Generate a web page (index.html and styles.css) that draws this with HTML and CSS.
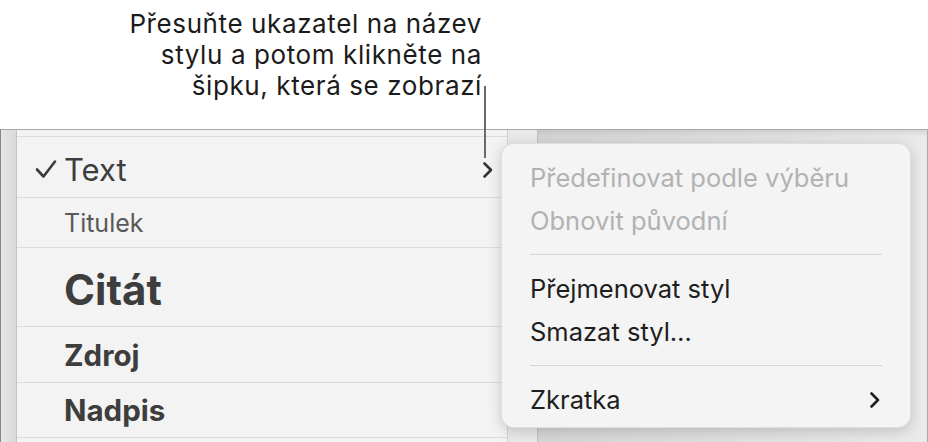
FILE: index.html
```html
<!DOCTYPE html>
<html>
<head>
<meta charset="UTF-8"/>
<title>Styly odstavce</title>
<link rel="stylesheet" href="styles.css">
</head>
<body>
<div class="callout">
<p class="callout-text">Přesuňte ukazatel na název<br>stylu a potom klikněte na<br>šipku, která se zobrazí</p>
<div class="callout-line"></div>
</div>
<div class="frame">
<div class="sidebar"></div>
<ul class="styles">
<li class="row row-cut"></li>
<li class="row row-text">
<svg class="check" width="22" height="20" viewBox="0 0 22 20"><path d="M2 10.5 L8.5 17.5 L20 2.5" fill="none" stroke="#3b3b3b" stroke-width="2.6" stroke-linecap="round" stroke-linejoin="round"/></svg>
<span class="name">Text</span>
<svg class="chevron" width="12" height="18" viewBox="0 0 12 18"><path d="M2.5 2.5 L9 9 L2.5 15.5" fill="none" stroke="#333" stroke-width="2.6" stroke-linecap="round" stroke-linejoin="round"/></svg>
</li>
<li class="row row-caption"><span class="name">Titulek</span></li>
<li class="row row-quote"><span class="name">Citát</span></li>
<li class="row row-source"><span class="name">Zdroj</span></li>
<li class="row row-heading"><span class="name">Nadpis</span></li>
</ul>
<div class="gutter"></div>
<div class="canvas"></div>
<div class="menu">
<div class="item disabled">Předefinovat podle výběru</div>
<div class="item disabled">Obnovit původní</div>
<div class="sep"></div>
<div class="item">Přejmenovat styl</div>
<div class="item">Smazat styl…</div>
<div class="sep"></div>
<div class="item">Zkratka
<svg class="chevron" width="12" height="18" viewBox="0 0 12 18"><path d="M2.5 2.5 L9 9 L2.5 15.5" fill="none" stroke="#1e1e1e" stroke-width="2.6" stroke-linecap="round" stroke-linejoin="round"/></svg>
</div>
</div>
</div>
</body>
</html>
```

FILE: styles.css
```css
body {
    margin: 0;
    width: 928px;
    height: 442px;
    overflow: hidden;
    background: #fff;
    font-family: Inter, "Liberation Sans", sans-serif;
}
.callout {
    position: relative;
    height: 129px;
}
.callout-text {
    margin: 0;
    padding: 8px 0 0 0;
    width: 482px;
    text-align: right;
    font-size: 26px;
    letter-spacing: 0.6px;
    line-height: 31px;
    color: #1b1b1b;
}
.callout-line {
    position: absolute;
    left: 484px;
    top: 86px;
    width: 2px;
    height: 72px;
    background: #6a6a6a;
    z-index: 5;
}
.frame {
    position: relative;
    display: flex;
    height: 312px;
    border-top: 1px solid #a9a9a9;
    border-left: 1px solid #858585;
    border-right: 1px solid #a9a9a9;
}
.sidebar {
    width: 15px;
    background: linear-gradient(to right, #e6e6e6, #d9d9d9);
    border-right: 1px solid #c6c6c6;
}
.styles {
    list-style: none;
    margin: 0;
    padding: 0;
    width: 490px;
    background: #f3f3f3;
    border-right: 1px solid #d2d2d2;
}
.row {
    display: flex;
    align-items: center;
    padding-left: 47px;
    border-bottom: 1px solid #dcdcdc;
    color: #3d3d3d;
    position: relative;
}
.row-cut { height: 6px; }
.row-text { height: 60px; }
.row-caption { height: 49px; }
.row-quote { height: 78px; }
.row-source { height: 55px; }
.row-heading { height: 54px; }
.row-text .name {
    font-size: 31px;
    padding-top: 4px;
}
.row-caption .name {
    font-size: 25px;
    color: #595959;
}
.row-quote .name {
    font-size: 42px;
    font-weight: 700;
    padding-top: 4px;
}
.row-source .name,
.row-heading .name {
    font-size: 29.5px;
    font-weight: 700;
}
.check {
    position: absolute;
    left: 18px;
    top: 22px;
}
.row .chevron {
    margin-left: auto;
    margin-right: 13px;
    margin-top: 6px;
}
.gutter {
    width: 29px;
    background: #e9e9e9;
    border-right: 1px solid #c4c4c4;
}
.canvas {
    flex: 1;
    background: linear-gradient(to right, #d6d6d6, #e2e2e2 60%, #ebebeb);
    box-shadow: inset 0 6px 6px -4px rgba(0, 0, 0, 0.12);
}
.menu {
    position: absolute;
    left: 500px;
    top: 13px;
    width: 410px;
    height: 285px;
    box-sizing: border-box;
    padding-top: 12px;
    background: #f4f4f4;
    border: 1px solid rgba(0, 0, 0, 0.09);
    border-radius: 13px;
    box-shadow: 0 3px 14px rgba(0, 0, 0, 0.18);
}
.item {
    display: flex;
    align-items: center;
    height: 43px;
    padding: 0 28px;
    font-size: 25.5px;
    color: #1e1e1e;
}
.item.disabled {
    color: #b2b2b2;
}
.item .chevron {
    margin-left: auto;
    margin-right: 1px;
}
.sep {
    height: 1px;
    margin: 12px 28px;
    background: #d6d6d6;
}
```
